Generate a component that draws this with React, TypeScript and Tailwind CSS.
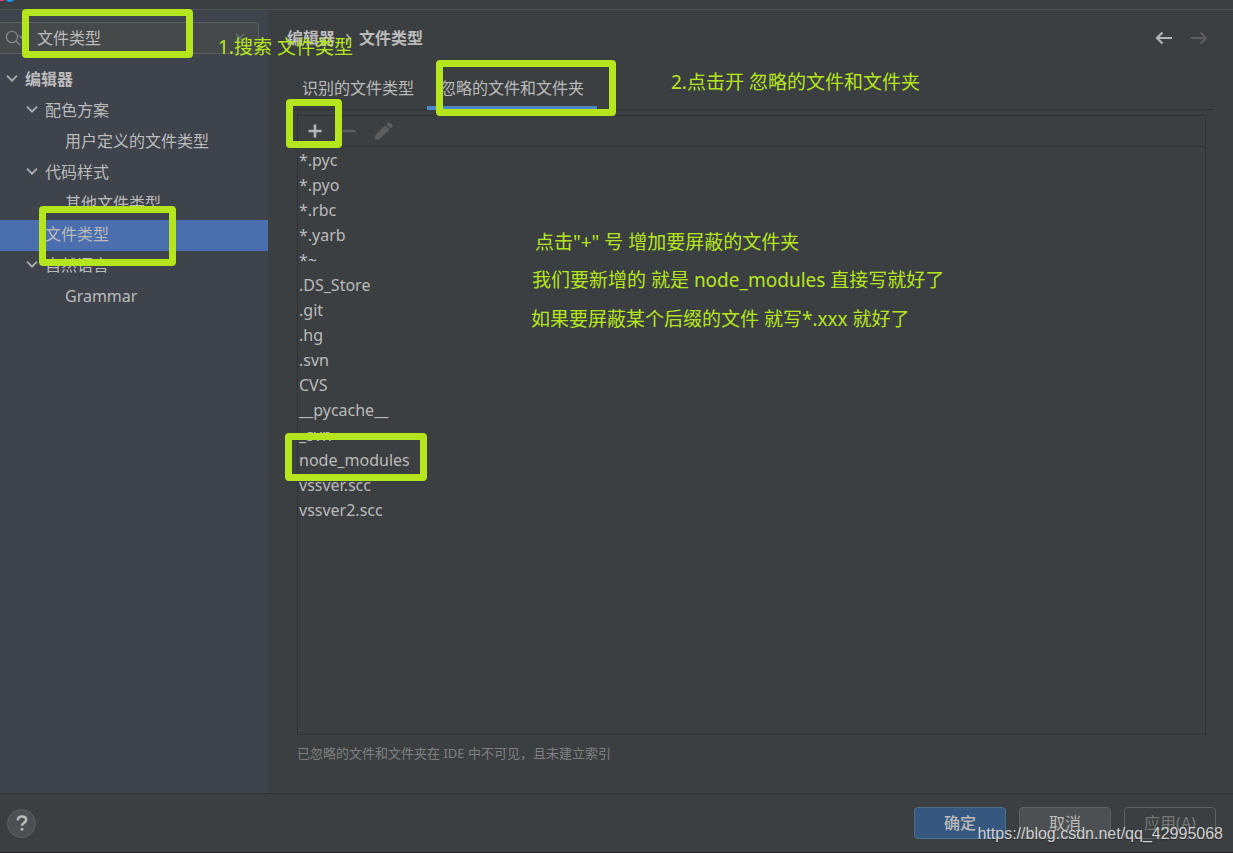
import { useState } from "react";
import clsx from "clsx";

interface TreeNode {
  label: string;
  level: 0 | 1 | 2;
  expandable?: boolean;
  bold?: boolean;
}

const TREE: TreeNode[] = [
  { label: "编辑器", level: 0, expandable: true, bold: true },
  { label: "配色方案", level: 1, expandable: true },
  { label: "用户定义的文件类型", level: 2 },
  { label: "代码样式", level: 1, expandable: true },
  { label: "其他文件类型", level: 2 },
  { label: "文件类型", level: 1 },
  { label: "自然语言", level: 1, expandable: true },
  { label: "Grammar", level: 2 },
];

const INDENT = { 0: "pl-[5px]", 1: "pl-[25px]", 2: "pl-[45px]" };

const TABS = ["识别的文件类型", "忽略的文件和文件夹"];

const PATTERNS = [
  "*.pyc",
  "*.pyo",
  "*.rbc",
  "*.yarb",
  "*~",
  ".DS_Store",
  ".git",
  ".hg",
  ".svn",
  "CVS",
  "__pycache__",
  "_svn",
  "node_modules",
  "vssver.scc",
  "vssver2.scc",
];

// hand-drawn frames and notes on top of the dialog
const FRAMES = [
  "left-[22px] top-[9px] w-[171px] h-[49px]",
  "left-[436px] top-[60px] w-[180px] h-[56px]",
  "left-[286px] top-[99px] w-[56px] h-[49px]",
  "left-[39px] top-[206px] w-[137px] h-[60px]",
  "left-[285px] top-[433px] w-[142px] h-[48px]",
];

const NOTES = [
  { text: "1.搜索 文件类型", place: "left-[218px] top-[34px]" },
  { text: "2.点击开 忽略的文件和文件夹", place: "left-[671px] top-[69px]" },
  { text: '点击"+" 号 增加要屏蔽的文件夹', place: "left-[535px] top-[229px]" },
  { text: "我们要新增的 就是 node_modules 直接写就好了", place: "left-[532px] top-[267px]" },
  { text: "如果要屏蔽某个后缀的文件 就写*.xxx 就好了", place: "left-[531px] top-[306px]" },
];

function Chevron() {
  return (
    <svg className="h-3.5 w-3.5" viewBox="0 0 14 14" fill="none" stroke="#adb0b3" strokeWidth="1.7">
      <path d="M2 3.7 7 8.7l5-5" />
    </svg>
  );
}

function TitleBar() {
  return (
    <div className="h-[10px] border-b border-[#515456]">
      <svg className="block h-[3px] w-4" viewBox="0 0 16 3">
        <path d="M0 0h4.5L3 1H0z" fill="#ff318c" />
        <path d="M6 0h8.5L12 1.5 9 2 6.5 1z" fill="#1a9bf0" />
      </svg>
    </div>
  );
}

function Sidebar() {
  const [selected, setSelected] = useState("文件类型");
  return (
    <aside className="w-[268px] shrink-0 bg-[#3f434c] pt-3">
      <div className="mr-[9px] mb-[11px] flex h-8 items-center rounded-r border border-l-0 border-[#5b5f61] bg-[#45494a] pr-[13px] pl-[5px]">
        <svg className="h-4 w-5 shrink-0" viewBox="0 0 20 16" fill="none" stroke="#7f8589" strokeWidth="1.4">
          <circle cx="7" cy="7" r="5.6" />
          <path d="m11 11 4.2 4.2M15 6.500h5l-2.500 2.500z" />
        </svg>
        <input
          type="text"
          aria-label="搜索设置"
          defaultValue="文件类型"
          className="ml-3 h-full min-w-0 flex-1 bg-transparent pb-0.5 text-[#bbbbbb] outline-none"
        />
        <button type="button" aria-label="清除" className="shrink-0">
          <svg className="h-2.5 w-2.5" viewBox="0 0 10 10" stroke="#6e7375" strokeWidth="1.2">
            <path d="m1 1 8 8M9 1 1 9" />
          </svg>
        </button>
      </div>
      <ul>
        {TREE.map((n) => (
          <li key={n.label}>
            <button
              type="button"
              onClick={() => setSelected(n.label)}
              className={clsx(
                "flex h-[31px] w-full items-center pb-1 text-left",
                INDENT[n.level],
                n.bold && "font-bold",
                selected === n.label && "bg-[#4b6eaf]"
              )}
            >
              <span className="w-5 shrink-0">{n.expandable && <Chevron />}</span>
              {n.label}
            </button>
          </li>
        ))}
      </ul>
    </aside>
  );
}

function Breadcrumb() {
  return (
    <div className="flex h-6 items-center justify-between pr-[6px]">
      <h1 className="flex items-center font-bold">
        <span>编辑器</span>
        <svg className="mr-1.5 ml-2 h-2.5 w-2.5" viewBox="0 0 10 10" fill="none" stroke="#adb0b3" strokeWidth="1.5">
          <path d="m3.500 1 3 4-3 4" />
        </svg>
        <span>文件类型</span>
      </h1>
      <div className="flex gap-[19px]">
        <button type="button" aria-label="后退">
          <svg className="h-4 w-[17px]" viewBox="0 0 17 16" fill="none" stroke="#b4b7b9" strokeWidth="2.2">
            <path d="M17 8H2M7.500 2.500 2 8l5.500 5.500" />
          </svg>
        </button>
        <button type="button" aria-label="前进" disabled>
          <svg className="h-4 w-[17px]" viewBox="0 0 17 16" fill="none" stroke="#5b5d5f" strokeWidth="2.2">
            <path d="M0 8h15M9.500 2.500 15 8l-5.500 5.500" />
          </svg>
        </button>
      </div>
    </div>
  );
}

function IgnoredPanel() {
  return (
    <div className="mt-[5px] mr-2 ml-2.5 flex flex-1 flex-col border border-[#323232]">
      <div className="flex h-[31px] items-center gap-[18px] border-b border-[#323232] pl-[9px]">
        <button type="button" aria-label="添加">
          <svg className="h-4 w-4" viewBox="0 0 16 16" stroke="#b4b7b9" strokeWidth="2.6">
            <path d="M8 1.500v13M1.500 8h13" />
          </svg>
        </button>
        <button type="button" aria-label="移除" disabled>
          <svg className="h-4 w-4" viewBox="0 0 16 16" stroke="#5b5d5f" strokeWidth="2.6">
            <path d="M1.500 8h13" />
          </svg>
        </button>
        <button type="button" aria-label="编辑" disabled>
          <svg className="h-[18px] w-[18px]" viewBox="0 0 18 18" fill="#5b5d5f">
            <path d="M0 13.500 10.300 3.200l4.200 4.200L4.200 17.500H0zM11.500 2.200 13.200.600q1-.7 1.900.1l2.200 2.200q.8.900.1 1.900l-1.700 1.600z" />
          </svg>
        </button>
      </div>
      <ul className="flex-1 pt-px pl-px">
        {PATTERNS.map((p) => (
          <li key={p} className="h-[25px] leading-[25px]">
            {p}
          </li>
        ))}
      </ul>
    </div>
  );
}

function Content() {
  const [tab, setTab] = useState(1);
  return (
    <main className="flex min-w-0 flex-1 flex-col pt-4 pr-[19px] pl-[19px]">
      <Breadcrumb />
      <div role="tablist" className="mt-[18px] flex h-[42px] border-b border-[#323232] pl-0.5">
        {TABS.map((t, i) => (
          <button
            key={t}
            type="button"
            role="tab"
            aria-selected={tab === i}
            onClick={() => setTab(i)}
            className={clsx(
              "-mb-px border-b-4 px-[13px] pt-0.5",
              tab === i ? "border-[#4a88c7]" : "border-transparent"
            )}
          >
            {t}
          </button>
        ))}
      </div>
      <IgnoredPanel />
      <p className="mt-2 mb-[30px] ml-2.5 text-[13px] leading-5 text-[#808080]">
        已忽略的文件和文件夹在 IDE 中不可见，且未建立索引
      </p>
    </main>
  );
}

function Footer() {
  return (
    <footer className="flex items-center border-t border-b border-t-[#323232] border-b-[#2b2425] py-[13px] pr-[17px] pl-[7px]">
      <button
        type="button"
        aria-label="帮助"
        className="flex h-[29px] w-[29px] items-center justify-center rounded-full border border-[#5e6163] bg-[#4c5052]"
      >
        <svg className="h-4 w-3" viewBox="0 0 12 16" fill="none" stroke="#bbbbbb" strokeWidth="2.600">
          <path d="M1.800 5.200Q1.800 1.500 6 1.500t4.200 3.400c0 2.800-4.200 3-4.200 5.900M6 13v2.500" />
        </svg>
      </button>
      <div className="ml-auto flex gap-[13px]">
        <button type="button" className="h-8 w-[92px] rounded border border-[#4c708c] bg-[#365880] font-medium">
          确定
        </button>
        <button type="button" className="h-8 w-[92px] rounded border border-[#5e6060] bg-[#4c5052]">
          取消
        </button>
        <button type="button" disabled className="h-8 w-[92px] rounded border border-[#5e6060] text-[#777777]">
          应用(A)
        </button>
      </div>
    </footer>
  );
}

export default function App() {
  return (
    <div className="relative flex min-h-screen flex-col bg-[#3c3f41] font-['Noto_Sans','Noto_Sans_CJK_SC',sans-serif] text-base text-[#bbbbbb]">
      <TitleBar />
      <div className="flex flex-1">
        <Sidebar />
        <Content />
      </div>
      <Footer />

      {FRAMES.map((f) => (
        <div key={f} className={clsx("pointer-events-none absolute rounded border-[7px] border-[#b5e61d]", f)} />
      ))}
      {NOTES.map((n) => (
        <p
          key={n.text}
          className={clsx(
            "pointer-events-none absolute text-[19px] leading-[26px] whitespace-nowrap text-[#b5e61d]",
            n.place
          )}
        >
          {n.text}
        </p>
      ))}
      <a
        href="https://blog.csdn.net/qq_42995068"
        className="absolute right-[10px] bottom-[8px] font-['Liberation_Sans',sans-serif] text-base leading-[22px] text-[#d2d2d2] [text-shadow:0_1px_1px_#00000066]"
      >
        https://blog.csdn.net/qq_42995068
      </a>
    </div>
  );
}
